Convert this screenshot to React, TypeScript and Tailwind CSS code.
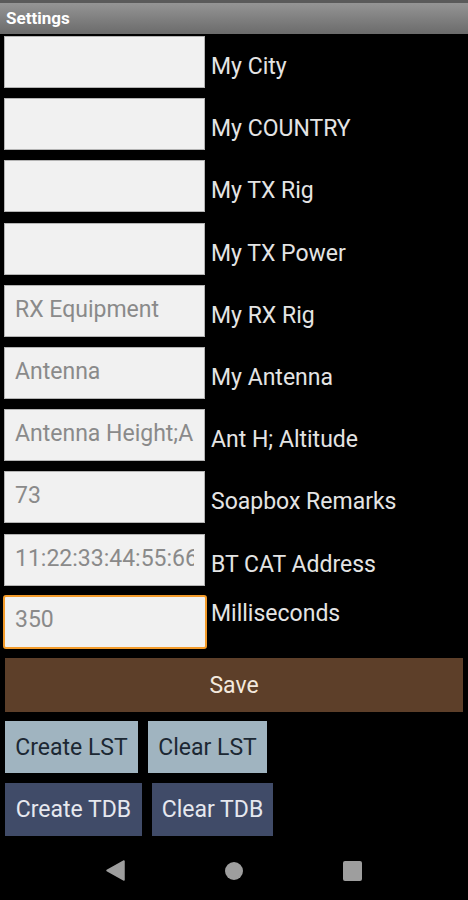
import React from "react";

// Settings screen — Android style form with label/input rows

type Row = { label: string; value?: string; focused?: boolean };

const rows: Row[] = [
  { label: "My City" },
  { label: "My COUNTRY" },
  { label: "My TX Rig" },
  { label: "My TX Power" },
  { label: "My RX Rig", value: "RX Equipment" },
  { label: "My Antenna", value: "Antenna" },
  { label: "Ant H; Altitude", value: "Antenna Height;Altitude" },
  { label: "Soapbox Remarks", value: "73" },
  { label: "BT CAT Address", value: "11:22:33:44:55:66" },
  { label: "Milliseconds", value: "350", focused: true },
];

const font = { fontFamily: "Roboto, 'Noto Sans', sans-serif" };

function FieldRow({ row }: { row: Row }) {
  if (row.focused) {
    return (
      <div className="flex h-[52px]">
        <div className="ml-[3px] -mt-px w-[204px] h-[54px] shrink-0 bg-[#f1f1f1] border-2 border-[#f39b2a] rounded-[3px] overflow-hidden">
          <div className="pl-[10px] pt-[9px] text-[23px] leading-[28px] text-[#8a8a8a] whitespace-nowrap">
            {row.value}
          </div>
        </div>
        <div className="pl-[4px] pt-[4px] text-[23px] leading-[28px] text-[#e4e4e4] whitespace-nowrap">
          {row.label}
        </div>
      </div>
    );
  }
  return (
    <div className="flex h-[52px]">
      <div className="ml-[4px] w-[201px] h-[52px] shrink-0 bg-[#f1f1f1] border border-[#b4b4b4] pl-[10px] pr-[10px] overflow-hidden">
        <div className="pt-[10px] text-[23px] leading-[28px] text-[#8a8a8a] whitespace-nowrap overflow-hidden">
          {row.value ?? ""}
        </div>
      </div>
      <div className="pl-[6px] pt-[17px] text-[23px] leading-[28px] text-[#e4e4e4] whitespace-nowrap">
        {row.label}
      </div>
    </div>
  );
}

export default function App() {
  return (
    <div className="w-[468px] h-[900px] bg-black flex flex-col overflow-hidden" style={font}>
      {/* ---- Title bar ---- */}
      <div className="h-[34px] shrink-0 border-t-[3px] border-[#5a5a5a] bg-gradient-to-b from-[#959595] to-[#6b6b6b] flex items-center pl-[6px]">
        <span className="text-white font-bold text-[17px] leading-none">Settings</span>
      </div>

      {/* ---- Form rows ---- */}
      <div className="flex flex-col gap-[10.2px] pt-[2px]">
        {rows.map((r) => (
          <FieldRow key={r.label} row={r} />
        ))}
      </div>

      {/* ---- Save ---- */}
      <div className="ml-[5px] mt-[10px] w-[458px] h-[54px] bg-[#5d3f29] flex items-center justify-center pt-[3px]">
        <span className="text-[23px] text-[#f3e9dd]">Save</span>
      </div>

      {/* ---- LST buttons ---- */}
      <div className="flex gap-[10px] ml-[5px] mt-[9px]">
        <div className="w-[133px] h-[52px] bg-[#a0b4c0] flex items-center justify-center pt-[3px] text-[23px] text-[#1c2833] whitespace-nowrap">
          Create LST
        </div>
        <div className="w-[119px] h-[52px] bg-[#a0b4c0] flex items-center justify-center pt-[3px] text-[23px] text-[#1c2833] whitespace-nowrap">
          Clear LST
        </div>
      </div>

      {/* ---- TDB buttons ---- */}
      <div className="flex gap-[10px] ml-[5px] mt-[10px]">
        <div className="w-[137px] h-[53px] bg-[#404b68] flex items-center justify-center pt-[3px] text-[23px] text-[#e6e8ef] whitespace-nowrap">
          Create TDB
        </div>
        <div className="w-[121px] h-[53px] bg-[#404b68] flex items-center justify-center pt-[3px] text-[23px] text-[#e6e8ef] whitespace-nowrap">
          Clear TDB
        </div>
      </div>

      {/* ---- Navigation bar ---- */}
      <div className="flex-1 flex items-center pl-[106px] gap-[100px] pt-[6px]">
        <svg width="19" height="21" viewBox="0 0 19 21">
          <path d="M18 1 L18 20 L1 10.5 Z" fill="#9e9e9e" stroke="#9e9e9e" strokeLinejoin="round" strokeWidth="1.5" />
        </svg>
        <div className="w-[18px] h-[18px] rounded-full bg-[#9e9e9e]" />
        <div className="w-[19px] h-[20px] rounded-[2px] bg-[#9e9e9e]" />
      </div>
    </div>
  );
}
